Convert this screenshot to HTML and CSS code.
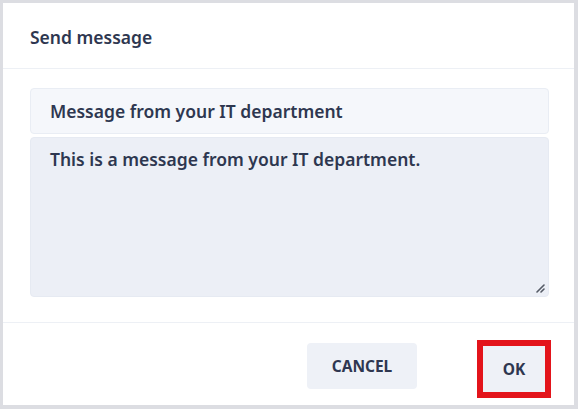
FILE: index.html
```html
<!DOCTYPE html>
<html>
<head>
<meta charset="utf-8">
<link rel="stylesheet" href="styles.css">
</head>
<body>
<div class="dialog">
  <div class="header">Send message</div>
  <div class="content">
    <div class="field">Message from your IT department</div>
    <div class="area">
      <span>This is a message from your IT department.</span>
      <svg class="grip" width="9" height="9" viewBox="0 0 9 9"><path d="M1 8 L8 1 M5 8 L8 5" stroke="#555b66" stroke-width="1.6" stroke-linecap="round"/></svg>
    </div>
  </div>
  <div class="footer">
    <button class="btn cancel">CANCEL</button>
    <div class="focus"><button class="btn ok">OK</button></div>
  </div>
</div>
</body>
</html>
```
FILE: styles.css
```css
html, body { margin: 0; padding: 0; }
body {
  background: #dcdde2;
  width: 578px;
  height: 409px;
  padding: 3px 4px 4px 3px;
  box-sizing: border-box;
  font-family: "Noto Sans", "Open Sans", sans-serif;
  color: #2e3750;
}
.dialog {
  background: #fff;
  height: 402px;
  display: flex;
  flex-direction: column;
}
.header {
  height: 66px;
  box-sizing: border-box;
  border-bottom: 1px solid #edf0f5;
  padding: 21px 0 0 27px;
  font-size: 17.5px;
  font-weight: 600;
  line-height: 26px;
}
.content {
  padding: 19px 25px 25px 27px;
  display: flex;
  flex-direction: column;
  gap: 3px;
  border-bottom: 1px solid #edf0f5;
}
.field {
  height: 46px;
  box-sizing: border-box;
  background: #f5f7fb;
  border: 1px solid #e9edf4;
  border-radius: 4px;
  padding: 0 19px;
  display: flex;
  align-items: center;
  font-size: 17.5px;
  font-weight: 600;
}
.area {
  position: relative;
  height: 160px;
  box-sizing: border-box;
  background: #eceff6;
  border: 1px solid #e6eaf2;
  border-radius: 4px;
  padding: 9px 19px;
  font-size: 17.5px;
  font-weight: 600;
  line-height: 24px;
}
.grip { position: absolute; right: 3px; bottom: 3px; }
.footer {
  flex: 1;
  display: flex;
  justify-content: flex-end;
  align-items: flex-start;
  padding: 0 23px 0 0;
  gap: 60px;
}
.btn {
  font-family: "Noto Sans", "Open Sans", sans-serif;
  height: 46px;
  border: none;
  border-radius: 4px;
  background: #eef1f7;
  color: #2e3750;
  font-size: 15.5px;
  font-weight: 700;
  padding: 0;
  width: 110px;
}
.cancel { margin-top: 20px; }
.focus {
  margin-top: 17px;
  border: 6px solid #e3141b;
}
.btn.ok { width: 62px; border-radius: 0; display: block; }
```
